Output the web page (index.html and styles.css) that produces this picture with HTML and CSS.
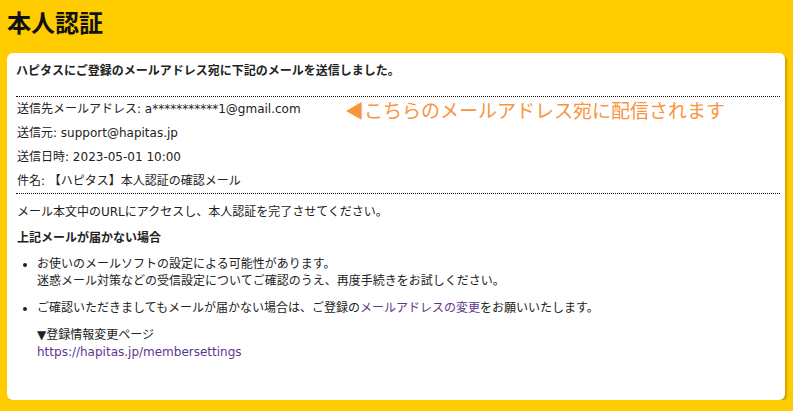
FILE: index.html
```html
<!DOCTYPE html>
<html lang="ja">
<head>
    <meta charset="UTF-8">
    <title>本人認証</title>
    <link rel="stylesheet" href="styles.css">
</head>
<body>
    <h1 class="page-title">本人認証</h1>

    <div class="card">
        <p class="lead">ハピタスにご登録のメールアドレス宛に下記のメールを送信しました。</p>

        <div class="mail-info">
            <p class="mail-row">送信先メールアドレス: a***********1@gmail.com</p>
            <p class="mail-row">送信元: support@hapitas.jp</p>
            <p class="mail-row">送信日時: 2023-05-01 10:00</p>
            <p class="mail-row">件名: 【ハピタス】本人認証の確認メール</p>
            <div class="note">◀こちらのメールアドレス宛に配信されます</div>
        </div>

        <p class="text">メール本文中のURLにアクセスし、本人認証を完了させてください。</p>

        <p class="sub-title">上記メールが届かない場合</p>
        <ul class="help-list">
            <li>お使いのメールソフトの設定による可能性があります。<br>迷惑メール対策などの受信設定についてご確認のうえ、再度手続きをお試しください。</li>
            <li>ご確認いただきましてもメールが届かない場合は、ご登録の<a href="#" class="link">メールアドレスの変更</a>をお願いいたします。</li>
        </ul>

        <p class="settings">▼登録情報変更ページ<br><a href="#" class="link">https://hapitas.jp/membersettings</a></p>
    </div>
</body>
</html>
```

FILE: styles.css
```css
body {
    margin: 0;
    padding: 0 8px 0 7px;
    background-color: #ffcc00;
    font-family: "DejaVu Sans", "Noto Sans CJK JP", sans-serif;
    font-size: 12px;
    color: #222;
}
.page-title {
    margin: 0;
    padding: 8px 0 0;
    height: 35px;
    box-sizing: border-box;
    font-family: "Noto Sans CJK JP", sans-serif;
    font-size: 24px;
    line-height: 28px;
    font-weight: bold;
    color: #111;
}
.card {
    margin-top: 18px;
    height: 347px;
    box-sizing: border-box;
    padding: 10px 5px 0 9px;
    background-color: #fff;
    border-radius: 6px;
    box-shadow: 2px 2px 2px rgba(150, 110, 0, 0.45);
}
p {
    margin: 0;
}
.lead {
    line-height: 17px;
    font-weight: bold;
}
.mail-info {
    position: relative;
    margin-top: 16px;
    padding: 0;
    border-top: 1px dotted #111;
    border-bottom: 1px dotted #111;
}
.mail-row {
    line-height: 24px;
    padding-left: 1px;
}
.note {
    position: absolute;
    left: 329px;
    top: 0;
    font-family: "Noto Sans CJK JP", sans-serif;
    font-size: 19px;
    line-height: 26px;
    color: #f7953f;
}
.text {
    margin-top: 10px;
    line-height: 17px;
    padding-left: 1px;
}
.sub-title {
    margin-top: 9px;
    line-height: 17px;
    font-weight: bold;
    padding-left: 1px;
}
.help-list {
    margin: 9px 0 0;
    padding-left: 21px;
}
.help-list li {
    line-height: 17px;
    margin-bottom: 10px;
}
.settings {
    margin-top: 10px;
    padding-left: 21px;
    line-height: 17px;
}
.link {
    color: #60368c;
    text-decoration: none;
}
```
